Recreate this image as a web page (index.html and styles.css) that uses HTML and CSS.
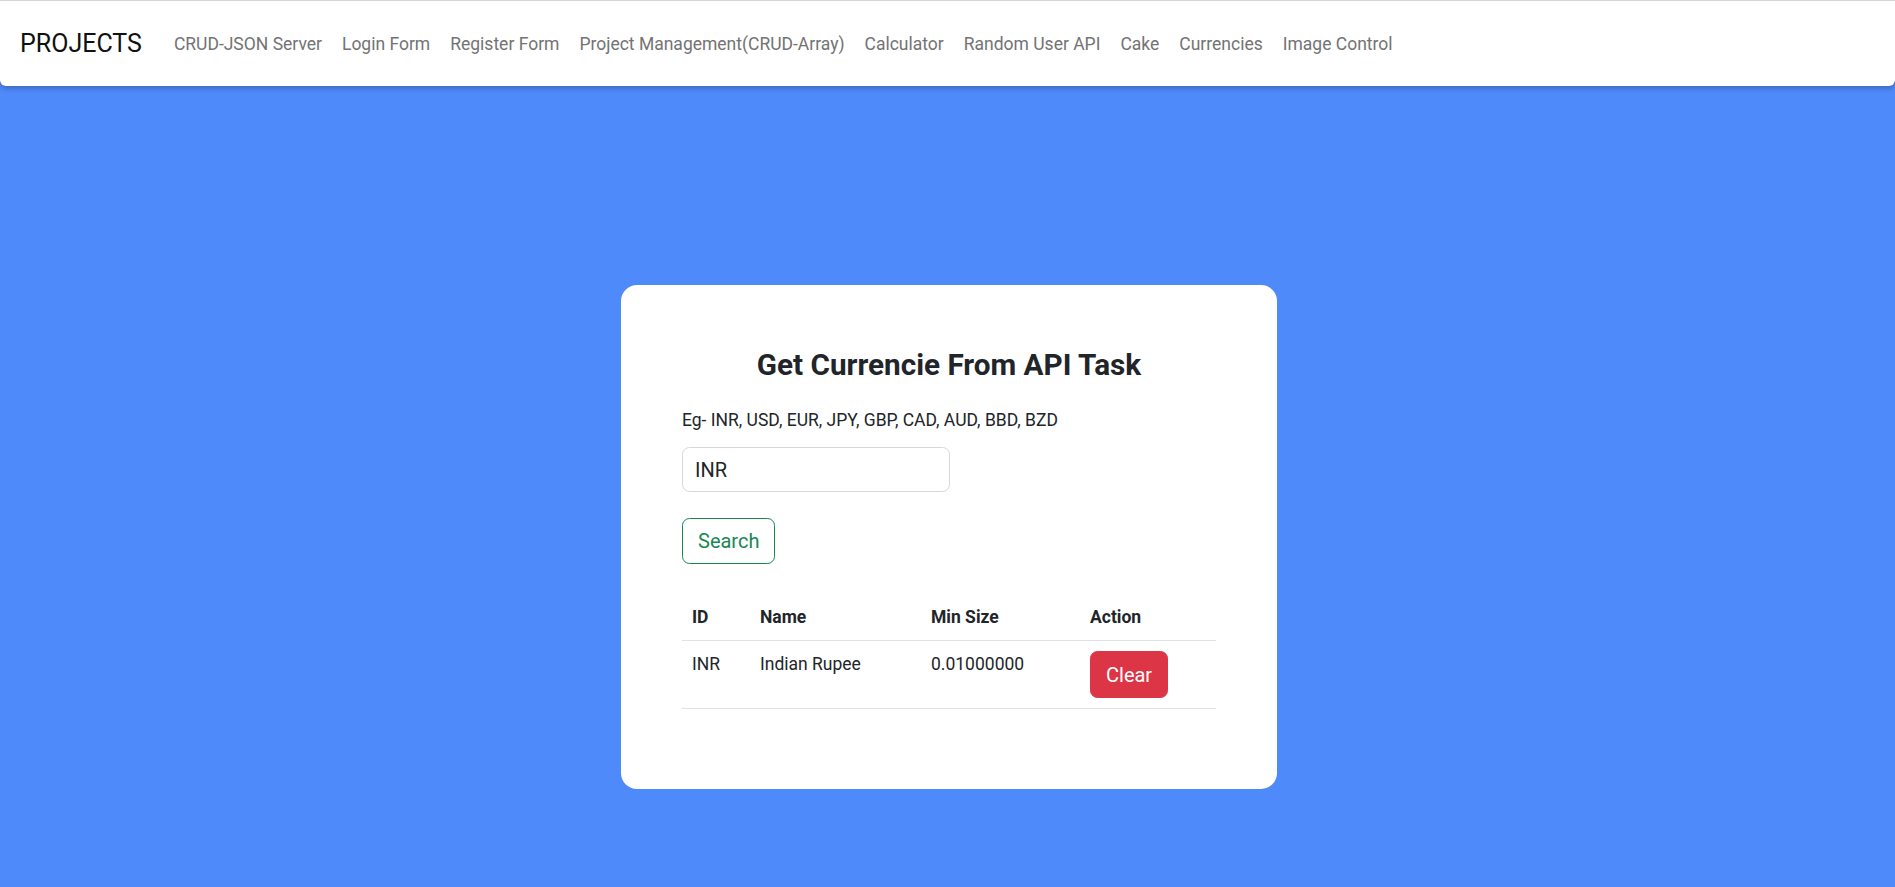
FILE: index.html
```html
<!DOCTYPE html>
<html lang="en">
<head>
<meta charset="utf-8">
<title>Currencies</title>
<link rel="stylesheet" href="styles.css">
</head>
<body>
<nav class="navbar">
  <a class="brand" href="#">PROJECTS</a>
  <ul class="nav-links">
    <li><a href="#">CRUD-JSON Server</a></li>
    <li><a href="#">Login Form</a></li>
    <li><a href="#">Register Form</a></li>
    <li><a href="#">Project Management(CRUD-Array)</a></li>
    <li><a href="#">Calculator</a></li>
    <li><a href="#">Random User API</a></li>
    <li><a href="#">Cake</a></li>
    <li><a href="#">Currencies</a></li>
    <li><a href="#">Image Control</a></li>
  </ul>
</nav>
<main class="main">
  <section class="card">
    <h4 class="title">Get Currencie From API Task</h4>
    <p class="hint">Eg- INR, USD, EUR, JPY, GBP, CAD, AUD, BBD, BZD</p>
    <input class="field" type="text" value="INR">
    <div class="actions">
      <button class="btn btn-outline">Search</button>
    </div>
    <table class="table">
      <thead>
        <tr>
          <th class="c-id">ID</th>
          <th class="c-name">Name</th>
          <th class="c-min">Min Size</th>
          <th class="c-act">Action</th>
        </tr>
      </thead>
      <tbody>
        <tr>
          <td>INR</td>
          <td>Indian Rupee</td>
          <td>0.01000000</td>
          <td><button class="btn btn-danger">Clear</button></td>
        </tr>
      </tbody>
    </table>
  </section>
</main>
</body>
</html>
```

FILE: styles.css
```css
* { box-sizing: border-box; }

html, body {
  margin: 0;
  padding: 0;
}

body {
  font-family: Roboto, "Liberation Sans", Arial, sans-serif;
  background: #4f8afb;
  min-height: 100vh;
  color: #212529;
}

.navbar {
  display: flex;
  align-items: center;
  height: 86px;
  padding: 0 0 0 20px;
  background: #ffffff;
  border-top: 1px solid #d6d6d6;
  border-radius: 0 0 6px 6px;
  box-shadow: 0 3px 5px rgba(0, 0, 0, 0.22);
}

.brand {
  font-size: 25px;
  line-height: 37px;
  color: #111111;
  text-decoration: none;
  margin-right: 22px;
}

.nav-links {
  display: flex;
  list-style: none;
  margin: 0;
  padding: 0;
}

.nav-links a {
  display: block;
  padding: 10px 10px;
  font-size: 17.5px;
  line-height: 26px;
  color: #737373;
  text-decoration: none;
}

.main {
  padding-top: 199px;
  padding-left: 3px;
}

.card {
  width: 656px;
  margin: 0 auto;
  background: #ffffff;
  border-radius: 16px;
  padding: 62px 61px 60px;
}

.title {
  margin: 0 0 24px;
  font-size: 29.7px;
  line-height: 36px;
  font-weight: 700;
  text-align: center;
  color: #212529;
}

.hint {
  margin: 0 0 14px;
  font-size: 17.5px;
  line-height: 26px;
}

.field {
  display: block;
  width: 268px;
  height: 45px;
  padding: 0 12px;
  font-family: inherit;
  font-size: 20px;
  color: #212529;
  border: 1px solid #d4d8dc;
  border-radius: 7.5px;
  background: #ffffff;
  outline: none;
}

.actions {
  margin-top: 26px;
}

.btn {
  font-family: inherit;
  font-size: 20px;
  line-height: 30px;
  padding: 7.5px 15px;
  border-radius: 7.5px;
  cursor: pointer;
}

.btn-outline {
  height: 46px;
  padding: 0 15px;
  color: #198754;
  background: transparent;
  border: 1px solid #198754;
}

.btn-danger {
  color: #ffffff;
  background: #dc3545;
  border: 1px solid #dc3545;
}

.table {
  width: 100%;
  margin-top: 30px;
  margin-bottom: 20px;
  border-collapse: collapse;
  table-layout: fixed;
  font-size: 17.5px;
  line-height: 26px;
}

.table th,
.table td {
  padding: 10px;
  text-align: left;
  vertical-align: top;
  border-bottom: 1px solid #dee2e6;
}

.table th {
  font-weight: 700;
}

.c-id { width: 68px; }
.c-name { width: 171px; }
.c-min { width: 159px; }
.c-act { width: 136px; }
```
